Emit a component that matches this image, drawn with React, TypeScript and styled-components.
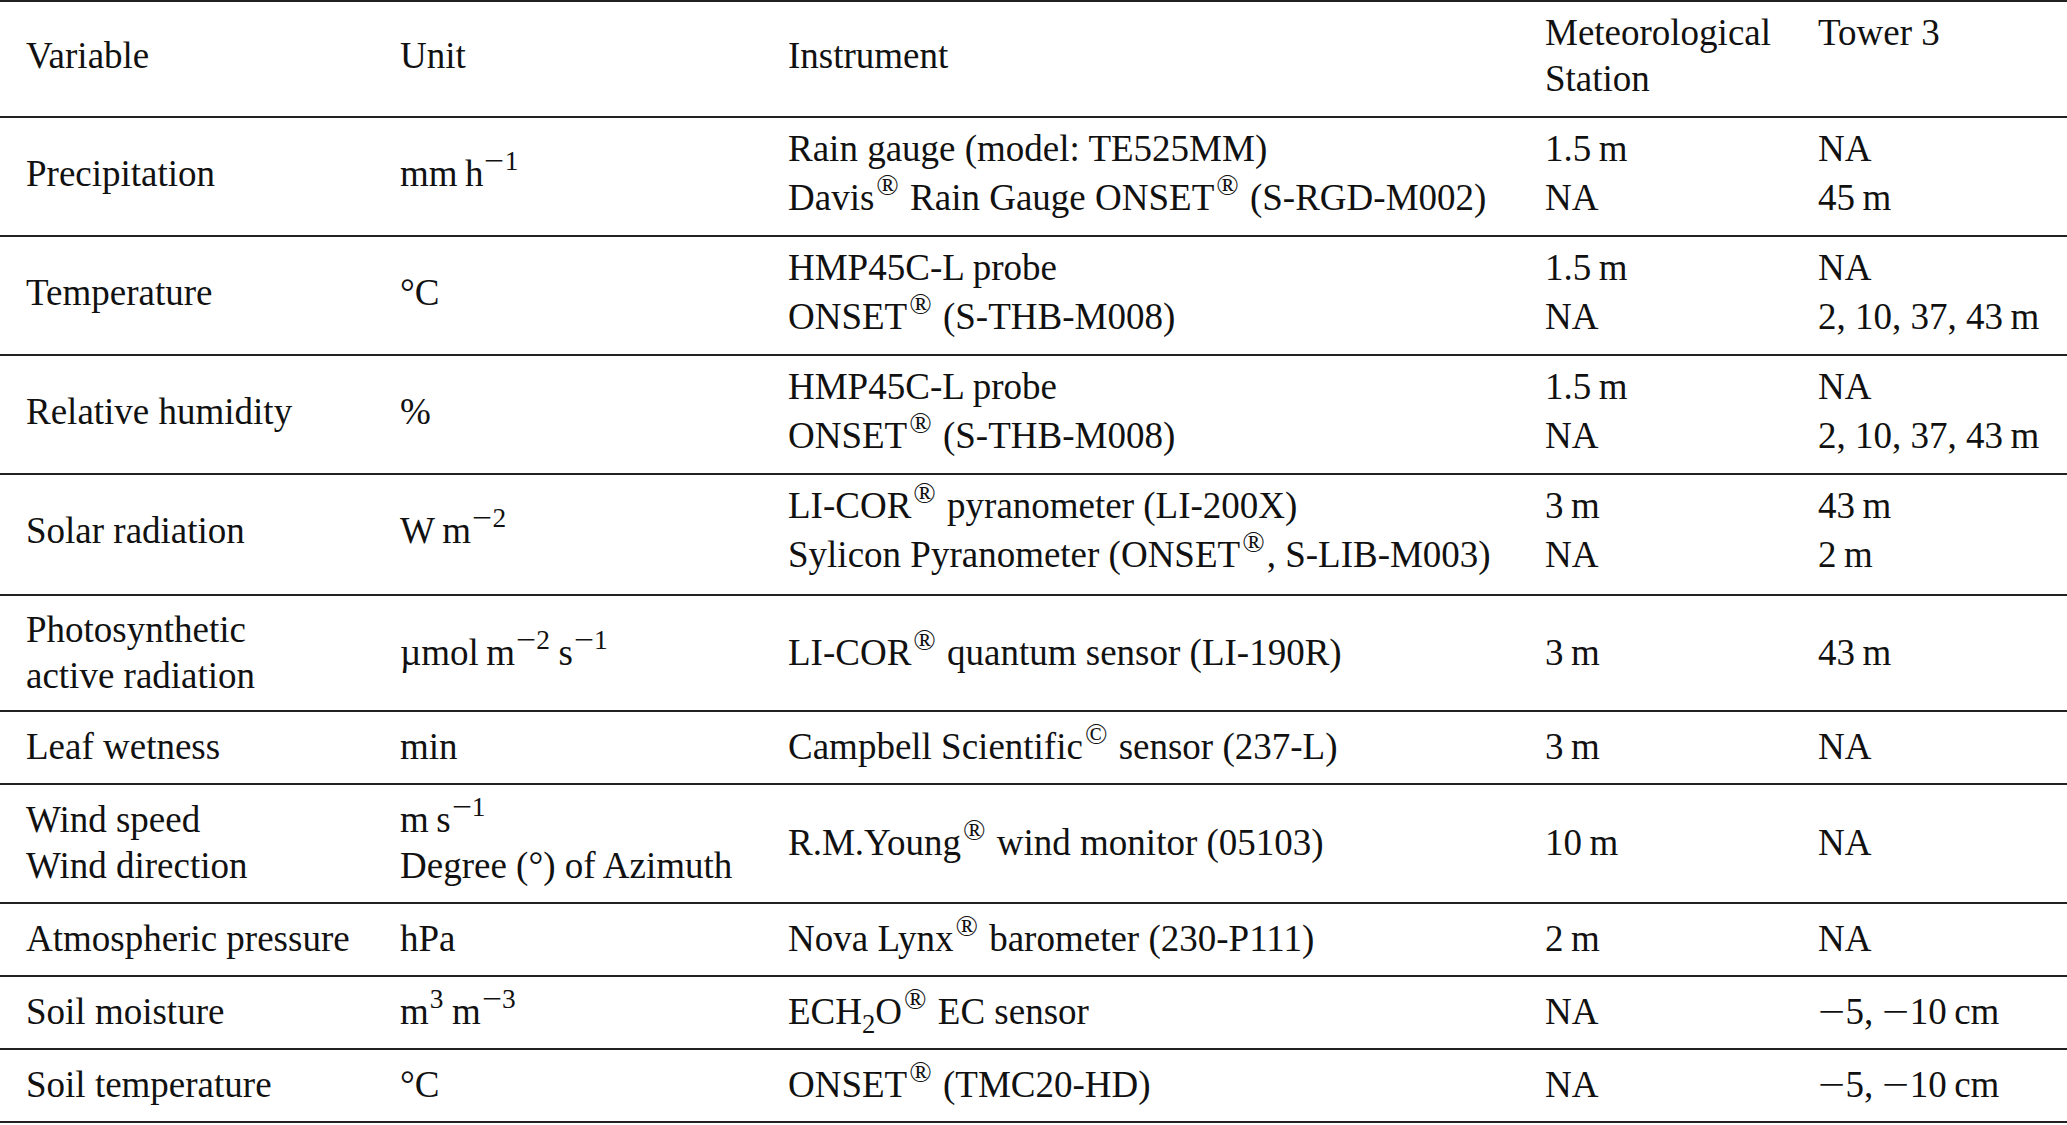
import React from "react";
import styled, { createGlobalStyle, css } from "styled-components";

const Global = createGlobalStyle`
  html, body { margin: 0; padding: 0; background: #fff; }
  body {
    font-family: "Liberation Serif", "Times New Roman", serif;
    color: #111;
  }
`;

const Table = styled.table`
  width: 2067px;
  border-collapse: collapse;
  table-layout: fixed;
  font-size: 37px;
  line-height: 46px;
  border-top: 2px solid #222;
`;

const Col = styled.col<{ $w?: number }>`
  width: ${(p) => (p.$w ? `${p.$w}px` : "auto")};
`;

const Line = styled.span`
  display: block;
`;

type Pad = "normal" | "loose" | "looseTall" | "tight";

const Row = styled.tr<{ $pad?: Pad }>`
  border-bottom: 2px solid #222;
  ${(p) =>
    (p.$pad === "loose" || p.$pad === "looseTall") &&
    css`
      & > td {
        padding-top: 8px;
        padding-bottom: ${p.$pad === "looseTall" ? 16 : 14}px;
      }
      ${Line} + ${Line} {
        margin-top: 3px;
      }
    `}
  ${(p) =>
    p.$pad === "tight" &&
    css`
      & > td {
        padding-top: 11px;
        padding-bottom: 11px;
      }
    `}
`;

const Head = styled.th<{ $top?: boolean }>`
  padding: 8px 0 14px 26px;
  vertical-align: ${(p) => (p.$top ? "top" : "middle")};
  white-space: nowrap;
  text-align: left;
  font-weight: normal;
`;

const Cell = styled.td`
  padding: 12px 0 13px 26px;
  vertical-align: middle;
  white-space: nowrap;
  text-align: left;
`;

const Sup = styled.sup`
  font-size: 0.74em;
  line-height: 0;
  vertical-align: 0.58em;
  margin-left: 1px;
  margin-right: 1px;
`;

const Mark = styled.sup`
  font-size: 0.8em;
  line-height: 0;
  vertical-align: 0.5em;
  margin: 0 2px 0 2px;
`;

const Sub = styled.sub`
  font-size: 0.72em;
  line-height: 0;
  vertical-align: -0.35em;
`;

const Minus = styled.span`
  display: inline-block;
  width: 0.74em;
  text-align: center;
  transform: scaleX(1.3);
`;

const T = "\u2009";
const R = () => <Mark>®</Mark>;
const M = () => <Minus>−</Minus>;

export default function App() {
  return (
    <>
      <Global />
      <Table>
        <colgroup>
          <Col $w={374} />
          <Col $w={388} />
          <Col $w={757} />
          <Col $w={273} />
          <Col />
        </colgroup>
        <thead>
          <Row>
            <Head>Variable</Head>
            <Head>Unit</Head>
            <Head>Instrument</Head>
            <Head $top>
              <Line>Meteorological</Line>
              <Line>Station</Line>
            </Head>
            <Head $top>Tower 3</Head>
          </Row>
        </thead>
        <tbody>
          <Row $pad="loose">
            <Cell>Precipitation</Cell>
            <Cell>
              mm{T}h
              <Sup>
                <M />1
              </Sup>
            </Cell>
            <Cell>
              <Line>Rain gauge (model: TE525MM)</Line>
              <Line>
                Davis<R /> Rain Gauge ONSET<R /> (S-RGD-M002)
              </Line>
            </Cell>
            <Cell>
              <Line>1.5{T}m</Line>
              <Line>NA</Line>
            </Cell>
            <Cell>
              <Line>NA</Line>
              <Line>45{T}m</Line>
            </Cell>
          </Row>
          <Row $pad="loose">
            <Cell>Temperature</Cell>
            <Cell>°C</Cell>
            <Cell>
              <Line>HMP45C-L probe</Line>
              <Line>
                ONSET<R /> (S-THB-M008)
              </Line>
            </Cell>
            <Cell>
              <Line>1.5{T}m</Line>
              <Line>NA</Line>
            </Cell>
            <Cell>
              <Line>NA</Line>
              <Line>2, 10, 37, 43{T}m</Line>
            </Cell>
          </Row>
          <Row $pad="loose">
            <Cell>Relative humidity</Cell>
            <Cell>%</Cell>
            <Cell>
              <Line>HMP45C-L probe</Line>
              <Line>
                ONSET<R /> (S-THB-M008)
              </Line>
            </Cell>
            <Cell>
              <Line>1.5{T}m</Line>
              <Line>NA</Line>
            </Cell>
            <Cell>
              <Line>NA</Line>
              <Line>2, 10, 37, 43{T}m</Line>
            </Cell>
          </Row>
          <Row $pad="looseTall">
            <Cell>Solar radiation</Cell>
            <Cell>
              W{T}m
              <Sup>
                <M />2
              </Sup>
            </Cell>
            <Cell>
              <Line>
                LI-COR<R /> pyranometer (LI-200X)
              </Line>
              <Line>
                Sylicon Pyranometer (ONSET<R />, S-LIB-M003)
              </Line>
            </Cell>
            <Cell>
              <Line>3{T}m</Line>
              <Line>NA</Line>
            </Cell>
            <Cell>
              <Line>43{T}m</Line>
              <Line>2{T}m</Line>
            </Cell>
          </Row>
          <Row $pad="tight">
            <Cell>
              <Line>Photosynthetic</Line>
              <Line>active radiation</Line>
            </Cell>
            <Cell>
              µmol{T}m
              <Sup>
                <M />2
              </Sup>
              {T}s
              <Sup>
                <M />1
              </Sup>
            </Cell>
            <Cell>
              LI-COR<R /> quantum sensor (LI-190R)
            </Cell>
            <Cell>3{T}m</Cell>
            <Cell>43{T}m</Cell>
          </Row>
          <Row>
            <Cell>Leaf wetness</Cell>
            <Cell>min</Cell>
            <Cell>
              Campbell Scientific<Mark>©</Mark> sensor (237-L)
            </Cell>
            <Cell>3{T}m</Cell>
            <Cell>NA</Cell>
          </Row>
          <Row>
            <Cell>
              <Line>Wind speed</Line>
              <Line>Wind direction</Line>
            </Cell>
            <Cell>
              <Line>
                m{T}s
                <Sup>
                  <M />1
                </Sup>
              </Line>
              <Line>Degree (°) of Azimuth</Line>
            </Cell>
            <Cell>
              R.M.Young<R /> wind monitor (05103)
            </Cell>
            <Cell>10{T}m</Cell>
            <Cell>NA</Cell>
          </Row>
          <Row>
            <Cell>Atmospheric pressure</Cell>
            <Cell>hPa</Cell>
            <Cell>
              Nova Lynx<R /> barometer (230-P111)
            </Cell>
            <Cell>2{T}m</Cell>
            <Cell>NA</Cell>
          </Row>
          <Row>
            <Cell>Soil moisture</Cell>
            <Cell>
              m<Sup>3</Sup>
              {T}m
              <Sup>
                <M />3
              </Sup>
            </Cell>
            <Cell>
              ECH<Sub>2</Sub>O<R /> EC sensor
            </Cell>
            <Cell>NA</Cell>
            <Cell>
              <M />5, <M />10{T}cm
            </Cell>
          </Row>
          <Row>
            <Cell>Soil temperature</Cell>
            <Cell>°C</Cell>
            <Cell>
              ONSET<R /> (TMC20-HD)
            </Cell>
            <Cell>NA</Cell>
            <Cell>
              <M />5, <M />10{T}cm
            </Cell>
          </Row>
        </tbody>
      </Table>
    </>
  );
}
